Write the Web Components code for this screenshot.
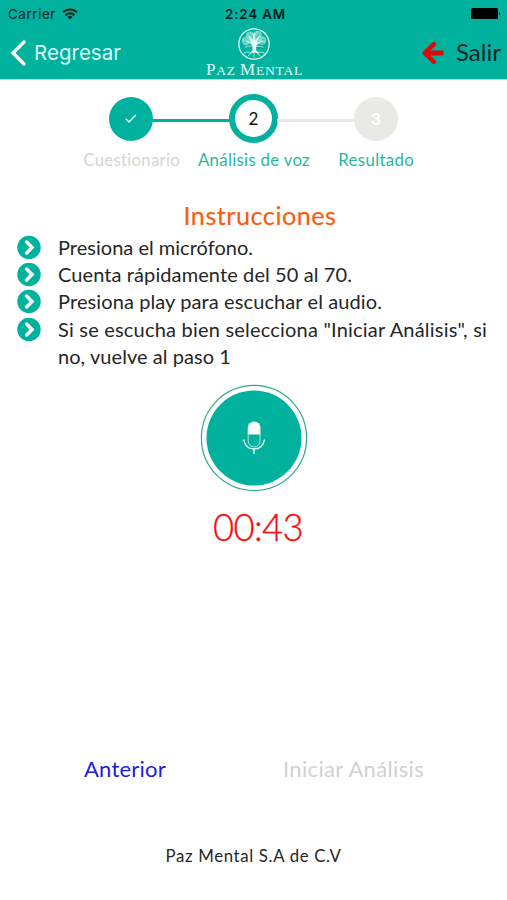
<!DOCTYPE html>
<html lang="es">
<head>
<meta charset="utf-8">
<title>Paz Mental</title>
<style>
body{margin:0;background:#fff;font-family:Lato,"Open Sans",sans-serif;color:#262626}
</style>
</head>
<body>
<paz-app></paz-app>
<script>
function define(name, html, ready){
  const t=document.createElement('template');
  t.innerHTML=html;
  customElements.define(name, class extends HTMLElement{
    connectedCallback(){
      if(this.shadowRoot) return;
      this.attachShadow({mode:'open'}).appendChild(t.content.cloneNode(true));
      if(ready) ready(this,this.shadowRoot);
    }
  });
}

/* Label whose tracking is adjusted to fill the "span" attribute, in pixels. */
define('paz-label', `<style>
:host{display:block;white-space:nowrap;flex:none}
span{display:inline-block}
</style><span><slot></slot></span>`, (el,root)=>{
  const s=root.querySelector('span'), want=+el.getAttribute('span');
  const n=el.textContent.length;
  s.style.letterSpacing=((want-s.getBoundingClientRect().width)/n).toFixed(4)+'px';
});

define('paz-status', `<style>
:host{display:flex;height:27px;align-items:center;justify-content:space-between;padding:0 6px 0 8px;box-sizing:border-box;font:13.4px/28px Inter,sans-serif;color:#06261f}
.l,.r{flex:1;display:flex;align-items:center;gap:6px}
.r{justify-content:flex-end}
.t{font-weight:600;color:#04211b;margin-left:2px}
svg{display:block}
</style>
<div class="l"><paz-label span="48">Carrier</paz-label>
<svg width="16" height="12" viewBox="0 0 16 12" fill="none" stroke="#06261f" stroke-width="2"><path d="M1 4.4a10 10 0 0 1 14 0M3.6 7.2a6.2 6.2 0 0 1 8.8 0"/><path d="M8 11.5 5.4 9a3.7 3.7 0 0 1 5.2 0z" fill="#06261f" stroke="none"/></svg></div>
<paz-label class="t" span="61">2:24 AM</paz-label>
<div class="r"><svg width="31" height="13" viewBox="0 0 31 13"><rect x="1" y="1" width="27" height="11" rx="1.5" fill="#000"/><path d="M29 4.5q1.8 2 0 4z" fill="#000"/></svg></div>`);

define('paz-logo', `<style>
:host{display:flex;flex-direction:column;align-items:center;color:#e2fff8}
paz-label{font:13.5px/16px "Liberation Serif",serif;margin:1px 0 0 2px}
big{font-size:17px;line-height:16px}
svg{display:block}
</style>
<svg width="34" height="34" viewBox="0 0 34 34" fill="none" stroke="#dcfff8" stroke-linecap="round">
<circle cx="17" cy="17" r="15.2" stroke-width="1.3"/>
<g fill="#a5e8db" stroke="none" opacity=".75"><circle cx="9" cy="14" r="4.2"/><circle cx="13" cy="8.5" r="4"/><circle cx="20.5" cy="8" r="4.2"/><circle cx="25" cy="13.5" r="4.2"/><circle cx="17" cy="12" r="4.5"/></g>
<g stroke="#12ad98" stroke-width=".6"><path d="M8 11l2 1M12 6l1 2M22 6l-1 3M27 12l-2 1M6 16l3-1M15 9l1 2M19 11l1-2M24 16l3 1M11 14l1 2M21 14l-1 2"/></g>
<path d="M15.4 24c1-3 .5-5-1-7l-5-3 5.4 1.7L12 9l4.2 5.6L17 6l1 8.5L22.5 9l-2.8 6.7 5.6-2-5.3 3.8c-1.3 2-1.5 4-.8 6.5l3 2.2-4.7-1-4.7 1z" fill="#f0fffc" stroke="#f0fffc" stroke-width=".5"/>
<path d="M12 25q-3 0-5 1M22 25q3 0 5 1M14 26l-3 3M17 25v5M20 26l3 3M15 19q-5 0-7 1M19 19q5 0 7 1" stroke-width=".7"/>
</svg>
<paz-label span="97"><big>P</big>AZ <big>M</big>ENTAL</paz-label>`);

define('paz-header', `<style>
:host{display:block;height:79px;background:#00b19d;border-bottom:1px solid #a6e3da;overflow:hidden}
nav{display:grid;grid-template-columns:1fr 100px 1fr;height:52px}
.back,.exit{display:flex;align-items:center;height:52px}
.back{padding-left:10px;gap:8px;font:20.5px/52px Inter,sans-serif;color:#dafff7}
.exit{justify-content:flex-end;padding-right:6px;gap:11px;font-size:24px;line-height:50px;color:#07261f}
.exit paz-label{margin-top:-2px}
.back svg,.exit svg{display:block}
</style>
<paz-status></paz-status>
<nav>
<div class="back"><svg width="16" height="28" viewBox="0 0 16 28" fill="none" stroke="#fff" stroke-width="3.3" stroke-linecap="round"><path d="M14 3 3 14l11 11"/></svg><paz-label span="87">Regresar</paz-label></div>
<paz-logo></paz-logo>
<div class="exit"><svg width="24" height="24" viewBox="0 0 24 24" fill="none" stroke="#df0909" stroke-width="4.4" stroke-linecap="round" stroke-linejoin="round"><path d="M13 3.2 3.5 12l9.5 8.8"/><path d="M5 12h17.5" stroke-linecap="butt" stroke-width="5"/></svg><paz-label span="45">Salir</paz-label></div>
</nav>`);

define('paz-step', `<style>
:host{display:flex;flex:none;box-sizing:border-box;width:44px;height:44px;border-radius:50%;align-items:center;justify-content:center;background:#00b19d;color:#fff;font:17px/44px Lato,sans-serif}
:host([state=current]){width:49px;height:49px;border:6px solid #00b19d;background:#fff;color:#111}
:host([state=pending]){background:#e9e9e5;color:#fff;font-weight:700}
</style><slot></slot>`);

define('paz-stepper', `<style>
:host{display:block}
.track{display:flex;align-items:center;width:289px;height:49px;margin-left:109px}
i{flex:1;height:3px;background:#00b19d;margin:4px -1px 0}
i.off{background:#e9e9e9}
.names{display:grid;grid-template-columns:repeat(3,122.3px);justify-items:center;margin:4px 0 0 70.5px;font-size:16.8px;line-height:26px;color:#27b89f}
.done{color:#d5d5d5}
svg{display:block}
</style>
<div class="track"><paz-step><svg width="14" height="12" viewBox="0 0 14 12" fill="none" stroke="#eafffa" stroke-width="1.5"><path d="M1.8 5.8 5 9 11.8 2"/></svg></paz-step><i></i><paz-step state="current">2</paz-step><i class="off"></i><paz-step state="pending">3</paz-step></div>
<div class="names"><paz-label class="done" span="97">Cuestionario</paz-label><paz-label span="112">Análisis de voz</paz-label><paz-label span="76">Resultado</paz-label></div>`);

define('paz-bullet', `<style>
:host{display:flex;gap:17px;font-size:20px;line-height:27.2px}
svg{display:block;flex:none;margin-top:1px}
</style>
<svg width="24" height="25" viewBox="0 0 24 25"><circle cx="12" cy="12.5" r="11.7" fill="#00b19d"/><path d="M9.6 7.1 15 12.5l-5.4 5.4" fill="none" stroke="#fff" stroke-width="3.5" stroke-linecap="round"/></svg>
<div><slot></slot></div>`);

define('paz-instructions', `<style>
:host{display:block;margin-top:25px}
h1{margin:0;display:flex;justify-content:center;font-size:25.2px;line-height:34px;font-weight:400;color:#fb5b0b;-webkit-text-stroke:.15px #fb5b0b;padding-left:13px}
section{padding:2px 0 0 17px}
</style>
<h1><paz-label span="153">Instrucciones</paz-label></h1>
<section>
<paz-bullet><paz-label span="195">Presiona el micrófono.</paz-label></paz-bullet>
<paz-bullet><paz-label span="294">Cuenta rápidamente del 50 al 70.</paz-label></paz-bullet>
<paz-bullet><paz-label span="324">Presiona play para escuchar el audio.</paz-label></paz-bullet>
<paz-bullet><paz-label span="429">Si se escucha bien selecciona "Iniciar Análisis", si</paz-label><paz-label span="173">no, vuelve al paso 1</paz-label></paz-bullet>
</section>`);

define('paz-recorder', `<style>
:host{display:flex;flex-direction:column;align-items:center;padding-top:13.5px}
svg{display:block}
paz-label{font-size:36.5px;font-weight:300;line-height:48px;color:#f50f0f;-webkit-text-stroke:.35px #f50f0f;margin:11.5px 0 0 9px}
</style>
<svg width="108" height="108" viewBox="0 0 108 108"><circle cx="54" cy="54" r="52.6" fill="#fff" stroke="#2fa78e" stroke-width="1.2"/><circle cx="54" cy="54" r="47.5" fill="#00b19d"/>
<path d="M47.7 50.4v-6.5a6.4 6.4 0 0 1 12.8 0v6.5z" fill="#fff"/><path d="M48.2 50v7a5.9 5.9 0 0 0 11.8 0v-7" fill="none" stroke="#a5e3d9" stroke-width="1"/><path d="M43.7 55.5c1 6 5 9.5 10.3 9.5s9.3-3.5 10.6-9.5M54 65v5" fill="none" stroke="#dffbf6" stroke-width="1.4"/></svg>
<paz-label span="90">00:43</paz-label>`);

define('paz-actions', `<style>
:host{display:flex;justify-content:space-between;padding:0 83px 0 84px;font-size:22px;line-height:32px}
.prev{color:#211de0}.next{color:#d1d1d1}
</style>
<paz-label class="prev" span="82">Anterior</paz-label><paz-label class="next" span="141">Iniciar Análisis</paz-label>`);

define('paz-app', `<style>
:host{display:flex;flex-direction:column;width:507px;height:900px;background:#fff;overflow:hidden}
paz-header{flex:none;box-sizing:content-box}
paz-stepper{padding-top:14px}
paz-actions{margin-top:auto}
footer{display:flex;justify-content:center;margin-top:58px;padding-bottom:31px;font-size:16.8px;line-height:26px}
</style>
<paz-header></paz-header>
<paz-stepper></paz-stepper>
<paz-instructions></paz-instructions>
<paz-recorder></paz-recorder>
<paz-actions></paz-actions>
<footer><paz-label span="176">Paz Mental S.A de C.V</paz-label></footer>`);
</script>
</body>
</html>
